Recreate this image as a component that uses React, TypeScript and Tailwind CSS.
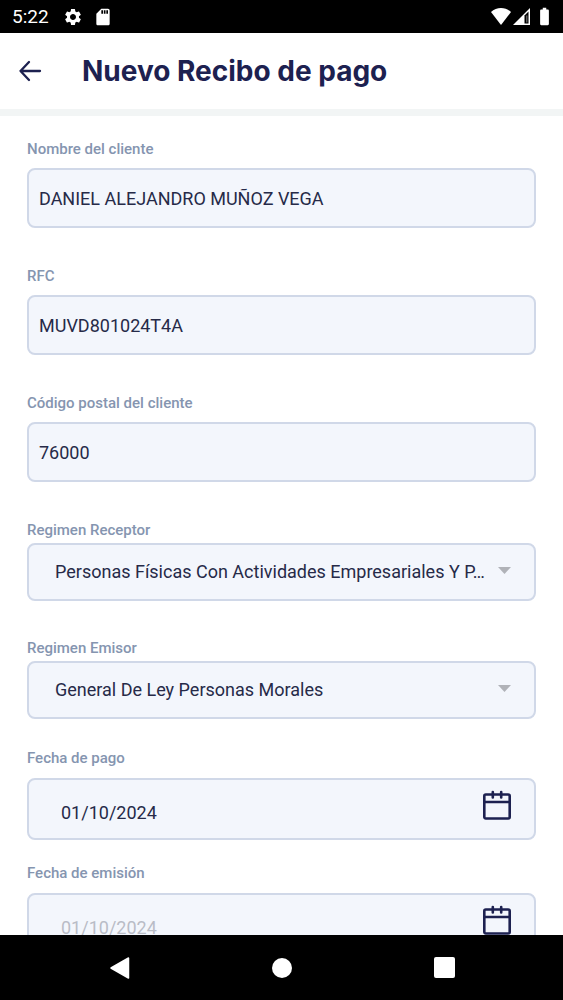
import { useState } from "react";
import { MdBatteryFull, MdSdCard, MdSettings } from "react-icons/md";

const LABEL = "block text-[15px] leading-5 font-medium text-[#8595b0]";
const BOX =
  "block w-full rounded-lg border-2 border-[#d0d8e8] bg-[#f3f6fc] text-lg text-[#262a48] outline-none";

function StatusBar() {
  return (
    <div className="flex h-[33px] shrink-0 items-center bg-black pr-2 pl-3 text-white">
      <span className="text-[19px] leading-6">5:22</span>
      <MdSettings className="ml-[14px] size-5" />
      <MdSdCard className="ml-[10px] size-5" />
      <svg className="ml-auto h-[17px] w-5" viewBox="0 0 20 17" fill="currentColor" aria-hidden="true">
        <path d="M0 4C5.500-1.200 14.500-1.200 20 4L10 17Z" />
      </svg>
      <svg className="ml-[2px] h-[17px] w-[17px]" viewBox="0 0 17 17" aria-hidden="true">
        <path d="M0 17L17 0V17Z" fill="currentColor" />
        <path d="M11.500 7.500L15.500 3.500V15.500H11.500Z" fill="black" />
        <path d="M13 7.500H14.500V14.500H13Z" fill="currentColor" opacity="0.35" />
      </svg>
      <MdBatteryFull className="ml-1 size-[21px]" />
    </div>
  );
}

function Header() {
  return (
    <header className="flex h-[83px] shrink-0 items-center border-b-[7px] border-[#f2f5f5] bg-white pl-[18px] text-[#1d2150]">
      <button type="button" aria-label="Regresar">
        <svg
          className="size-6"
          viewBox="0 0 24 24"
          fill="none"
          stroke="currentColor"
          strokeWidth="2.300"
          strokeLinecap="round"
          strokeLinejoin="round"
        >
          <path d="M22 12H2.500M11 3L2.500 12L11 21" />
        </svg>
      </button>
      <h1 className="ml-10 font-[Inter] text-[28px] leading-9 font-bold">Nuevo Recibo de pago</h1>
    </header>
  );
}

function TextField({ id, label, initial }: { id: string; label: string; initial: string }) {
  const [value, setValue] = useState(initial);
  return (
    <div className="mb-[38px]">
      <label htmlFor={id} className={LABEL}>
        {label}
      </label>
      <input
        id={id}
        value={value}
        onChange={(e) => setValue(e.target.value)}
        className={`${BOX} mt-[9px] h-[60px] px-[10px]`}
      />
    </div>
  );
}

function SelectField({ id, label, option }: { id: string; label: string; option: string }) {
  return (
    <div>
      <label htmlFor={id} className={LABEL}>
        {label}
      </label>
      <div className="relative mt-[3px]">
        <select id={id} className={`${BOX} h-[58px] appearance-none pr-12 pl-[26px] text-ellipsis`}>
          <option>{option}</option>
        </select>
        <svg
          className="pointer-events-none absolute top-6 right-[25px] h-[7px] w-[13px]"
          viewBox="0 0 13 7"
          fill="#b0b2b8"
          aria-hidden="true"
        >
          <path d="M0 0H13L6.500 7Z" />
        </svg>
      </div>
    </div>
  );
}

function DateField({ id, label, disabled }: { id: string; label: string; disabled?: boolean }) {
  const [value, setValue] = useState("01/10/2024");
  return (
    <div className="mb-[23px]">
      <label htmlFor={id} className={LABEL}>
        {label}
      </label>
      <div className="relative mt-[10px]">
        <input
          id={id}
          value={value}
          disabled={disabled}
          onChange={(e) => setValue(e.target.value)}
          className={`${BOX} h-[62px] pt-[6px] pr-16 pl-8 disabled:text-[#b9bcc6]`}
        />
        <button
          type="button"
          aria-label={`Elegir ${label.toLowerCase()}`}
          className="absolute top-3 right-6 text-[#1d2150]"
        >
          <svg
            className="block size-[30px]"
            viewBox="0 0 30 30"
            fill="none"
            stroke="currentColor"
            strokeWidth="2.600"
            strokeLinecap="round"
            strokeLinejoin="round"
          >
            <rect x="2.300" y="4.500" width="25.400" height="24" rx="1.500" />
            <path d="M2.300 12H27.700M10.800 2V7.500M19.200 2V7.500" />
          </svg>
        </button>
      </div>
    </div>
  );
}

function NavBar() {
  return (
    <nav className="grid h-[65px] shrink-0 grid-cols-[1fr_auto_1fr] items-center bg-black text-white">
      <button type="button" aria-label="Atrás" className="mr-[142px] justify-self-end">
        <svg className="block h-[22px] w-5" viewBox="0 0 20 22" fill="currentColor" stroke="currentColor" strokeLinejoin="round" strokeWidth="1.500">
          <path d="M1 11L18.500 1V21Z" />
        </svg>
      </button>
      <button type="button" aria-label="Inicio" className="size-5 rounded-full bg-white" />
      <button type="button" aria-label="Recientes" className="ml-[142px] size-[21px] rounded-xs bg-white" />
    </nav>
  );
}

export default function App() {
  return (
    <div className="flex h-screen flex-col bg-white font-[Roboto,sans-serif]">
      <StatusBar />
      <Header />
      <main className="min-h-0 flex-1 overflow-hidden px-[27px] pt-[23px]">
        <form>
          <TextField id="cliente" label="Nombre del cliente" initial="DANIEL ALEJANDRO MUÑOZ VEGA" />
          <TextField id="rfc" label="RFC" initial="MUVD801024T4A" />
          <TextField id="cp" label="Código postal del cliente" initial="76000" />
          <div className="mb-[29px] space-y-[37px]">
            <SelectField
              id="receptor"
              label="Regimen Receptor"
              option="Personas Físicas Con Actividades Empresariales Y P…"
            />
            <SelectField id="emisor" label="Regimen Emisor" option="General De Ley Personas Morales" />
          </div>
          <DateField id="pago" label="Fecha de pago" />
          <DateField id="emision" label="Fecha de emisión" disabled />
        </form>
      </main>
      <NavBar />
    </div>
  );
}
